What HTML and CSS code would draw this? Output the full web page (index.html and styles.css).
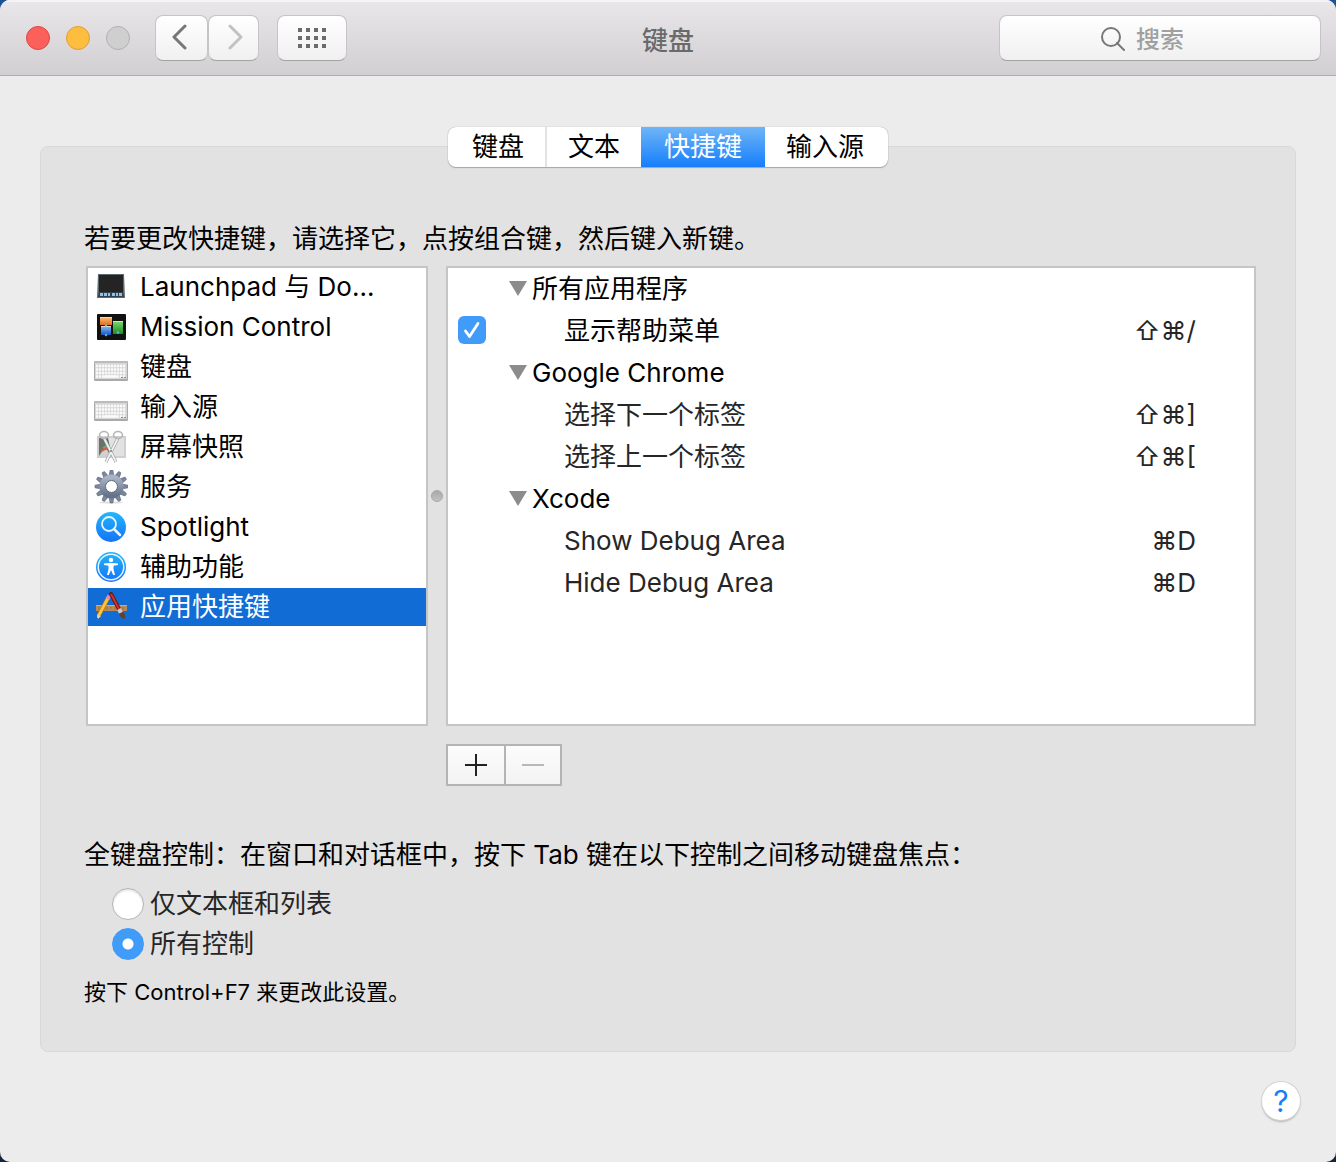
FILE: index.html
```html
<!DOCTYPE html>
<html lang="zh-CN">
<head>
    <meta charset="UTF-8">
    <meta name="viewport" content="width=device-width, initial-scale=1.0">
    <title>键盘</title>
    <link rel="stylesheet" href="styles.css">
</head>
<body>

    <div class="window">
        <!-- Title bar -->
        <header class="toolbar">
            <div class="toolbar-left">
                <div class="lights">
                    <button class="light close" aria-label="关闭"></button>
                    <button class="light minimize" aria-label="最小化"></button>
                    <button class="light disabled" aria-label="缩放" disabled></button>
                </div>
                <div class="nav-buttons">
                    <button class="tool-button back" aria-label="后退">
                        <svg width="18" height="28" viewBox="0 0 18 28"><path d="M14 2 L3 13 L14 24" fill="none" stroke="#777" stroke-width="3" stroke-linecap="round" stroke-linejoin="round"/></svg>
                    </button>
                    <button class="tool-button forward" aria-label="前进" disabled>
                        <svg width="18" height="28" viewBox="0 0 18 28"><path d="M4 2 L15 13 L4 24" fill="none" stroke="#c2c2c2" stroke-width="3" stroke-linecap="round" stroke-linejoin="round"/></svg>
                    </button>
                </div>
                <button class="tool-button grid" aria-label="显示全部">
                    <svg width="28" height="20" viewBox="0 0 28 20" fill="#6b6b6b"><path d="M0 0h4v4h-4zM8 0h4v4h-4zM16 0h4v4h-4zM24 0h4v4h-4zM0 8h4v4h-4zM8 8h4v4h-4zM16 8h4v4h-4zM24 8h4v4h-4zM0 16h4v4h-4zM8 16h4v4h-4zM16 16h4v4h-4zM24 16h4v4h-4z"/></svg>
                </button>
            </div>
            <h1>键盘</h1>
            <label class="search">
                <svg width="24" height="24" viewBox="0 0 24 24" fill="none" stroke="#777" stroke-width="2"><circle cx="10" cy="10" r="9"/><path d="M16 16 L23 23" stroke-linecap="round"/></svg>
                <input type="search" placeholder="搜索" aria-label="搜索">
            </label>
        </header>

        <main>
            <!-- Tabs -->
            <nav class="tabs">
                <button class="tab">键盘</button>
                <button class="tab">文本</button>
                <button class="tab active">快捷键</button>
                <button class="tab">输入源</button>
            </nav>

            <section class="panel">
                <p class="text">若要更改快捷键，请选择它，点按组合键，然后键入新键。</p>

                <div class="lists">
                    <!-- Categories -->
                    <ul class="categories">
                        <li><a href="#">
                            <svg class="icon" viewBox="0 1 34 34">
                                <path d="M4 5h26l1 24H3z" fill="#5c6a70"/><rect x="5" y="6" width="24" height="18" fill="#242424"/>
                                <path d="M5 23h24l1 5H4z" fill="#34414b"/>
                                <path d="M6 24h3v3h-3zM10 24h3v3h-3zM14 24h2v3h-2zM18 24h3v3h-3zM22 24h2v3h-2zM25 24h3v3h-3z" fill="#8cc4ee"/>
                            </svg>
                            <span>Launchpad 与 Do...</span></a></li>
                        <li><a href="#">
                            <svg class="icon" viewBox="0 1 34 34">
                                <defs>
                                    <linearGradient id="orange" x2="0" y2="1"><stop stop-color="#f5b473"/><stop offset="1" stop-color="#e46c12"/></linearGradient>
                                    <linearGradient id="blue" x2="0" y2="1"><stop stop-color="#7ab4ee"/><stop offset="1" stop-color="#1950c0"/></linearGradient>
                                    <linearGradient id="green" x2="0" y2="1"><stop stop-color="#76d36c"/><stop offset="1" stop-color="#198f1a"/></linearGradient>
                                </defs>
                                <rect x="3" y="5" width="29" height="26" rx="1" fill="#111"/>
                                <rect x="6" y="9" width="12" height="7" fill="url(#orange)"/>
                                <rect x="7" y="18" width="10" height="8" fill="url(#blue)"/>
                                <rect x="19" y="13" width="10" height="12" fill="url(#green)"/>
                                <path d="M6 8h12v1H6zM7 17h10v1H7zM19 12h10v1H19z" fill="#ddd"/>
                                <path d="M12 15l1.500 1.500-1.500 1.500-1.500-1.500zM12 24.500l1.500 1.500-1.500 1.500-1.500-1.500zM24 22l1.500 1.500-1.500 1.500-1.500-1.500z" fill="#5cbcf0"/>
                            </svg>
                            <span>Mission Control</span></a></li>
                        <li><a href="#">
                            <svg class="icon" viewBox="0 1 34 34">
                                <g id="keyboard">
                                    <rect x="0" y="12" width="34" height="20" rx="1" fill="#aaa"/>
                                    <rect x="1" y="12" width="32" height="18" fill="#d7d7d7"/>
                                    <path d="M0 12h34v2H0z" fill="#bbb"/>
                                    <path d="M2 17h30M2 20.500h30M2 24h30M2 27.500h30" stroke="#fafafa" stroke-width="2.500" stroke-dasharray="2.200 .8"/>
                                    <path d="M10 27.500h13" stroke="#fafafa" stroke-width="2.500"/>
                                    <path d="M27 28.500h2M30 28.500h2" stroke="#888"/>
                                </g>
                            </svg>
                            <span>键盘</span></a></li>
                        <li><a href="#">
                            <svg class="icon" viewBox="0 1 34 34"><use href="#keyboard"/></svg>
                            <span>输入源</span></a></li>
                        <li><a href="#">
                            <svg class="icon" viewBox="0 1 34 34">
                                <rect x="3" y="7" width="29" height="22" fill="#cfcfcf"/>
                                <rect x="5" y="9" width="25" height="18" fill="#b9bdb9"/>
                                <path d="M5 9h10l8 9-12 9H5z" fill="#6b6f6d"/>
                                <path d="M14 9h16v18H18z" fill="#e1e3e1"/>
                                <path d="M5 27l6-9 6 9z" fill="#cfd2cf"/>
                                <path d="M7 22l8-4" stroke="#d9583e" stroke-width="2"/><path d="M9 19l5-3" stroke="#58b86a" stroke-width="2"/>
                                <path d="M10 9L22 33M24 9L12 33" stroke="#999" stroke-width="3"/>
                                <path d="M10 9L22 33M24 9L12 33" stroke="#f2f2f2" stroke-width="1.800"/>
                                <g fill="none" stroke="#b5b5b5" stroke-width="1.600"><ellipse cx="10" cy="6" rx="4.500" ry="3.500"/><ellipse cx="24" cy="6" rx="4.500" ry="3.500"/></g>
                                <circle cx="17" cy="22" r="1" fill="#777"/>
                            </svg>
                            <span>屏幕快照</span></a></li>
                        <li><a href="#">
                            <svg class="icon" viewBox="0 1 34 34">
                                <defs>
                                    <linearGradient id="steel" x2="0" y2="1"><stop stop-color="#a9b4c5"/><stop offset="1" stop-color="#66728a"/></linearGradient>
                                    <path id="tooth" d="M15 7l1.200-6h2.600L20 7z"/>
                                </defs>
                                <ellipse cx="17" cy="33.500" rx="12" ry="1" fill="#ddd"/>
                                <g fill="#7c879d" stroke="#59647a" stroke-width=".6">
                                    <use href="#tooth"/>
                                    <use href="#tooth" transform="rotate(30 17.500 17.500)"/>
                                    <use href="#tooth" transform="rotate(60 17.500 17.500)"/>
                                    <use href="#tooth" transform="rotate(90 17.500 17.500)"/>
                                    <use href="#tooth" transform="rotate(120 17.500 17.500)"/>
                                    <use href="#tooth" transform="rotate(150 17.500 17.500)"/>
                                    <use href="#tooth" transform="rotate(180 17.500 17.500)"/>
                                    <use href="#tooth" transform="rotate(210 17.500 17.500)"/>
                                    <use href="#tooth" transform="rotate(240 17.500 17.500)"/>
                                    <use href="#tooth" transform="rotate(270 17.500 17.500)"/>
                                    <use href="#tooth" transform="rotate(300 17.500 17.500)"/>
                                    <use href="#tooth" transform="rotate(330 17.500 17.500)"/>
                                </g>
                                <circle cx="17.500" cy="17.500" r="9" fill="none" stroke="url(#steel)" stroke-width="6"/>
                                <circle cx="17.500" cy="17.500" r="6" fill="#fff" stroke="#59647a"/>
                            </svg>
                            <span>服务</span></a></li>
                        <li><a href="#">
                            <svg class="icon" viewBox="0 1 34 34">
                                <defs>
                                    <linearGradient id="sky" x2="0" y2="1"><stop stop-color="#22b7fa"/><stop offset="1" stop-color="#1672f8"/></linearGradient>
                                </defs>
                                <circle cx="17" cy="18" r="15" fill="url(#sky)"/>
                                <circle cx="15" cy="15" r="7" fill="none" stroke="#e6f5ff" stroke-width="1.800"/>
                                <path d="M20 20l6 6" stroke="#e6f5ff" stroke-width="2.500" stroke-linecap="round"/>
                            </svg>
                            <span>Spotlight</span></a></li>
                        <li><a href="#">
                            <svg class="icon" viewBox="0 1 34 34">
                                <circle cx="17" cy="18" r="15" fill="url(#sky)"/>
                                <circle cx="17" cy="18" r="12.800" fill="none" stroke="#e6f5ff" stroke-width="1.500"/>
                                <circle cx="17" cy="11" r="2.200" fill="#fff"/>
                                <path d="M10 14.500L15 14h4l5 .5v1.500l-4.500.8V20l1.500 6h-1.800L17 21l-2.200 5H13l1.500-6v-3.200L10 16z" fill="#fff"/>
                            </svg>
                            <span>辅助功能</span></a></li>
                        <li><a class="selected" href="#" aria-current="true">
                            <svg class="icon" viewBox="0 1 34 34">
                                <path d="M2 16h31v6H2z" fill="#b88a57"/><path d="M2 16h31v1H2z" fill="#d2aa75"/>
                                <path d="M5 18v3M9 18v2M13 18v3M17 18v2M21 18v3M25 18v2M29 18v3" stroke="#8b663d" stroke-width=".7"/>
                                <path d="M14 9L5 26" stroke="#b77515" stroke-width="4.200"/>
                                <path d="M14 9L5 26" stroke="#ffc53e" stroke-width="2.800"/>
                                <path d="M15.500 6.500L13.500 10" stroke="#e985ad" stroke-width="4"/>
                                <path d="M3.200 25l3.800 2-4 4z" fill="#ecd2a5"/><path d="M3 29l1 0-1 2z" fill="#222"/>
                                <path d="M17 5l8 15" stroke="#75130f" stroke-width="4" stroke-linecap="round"/>
                                <path d="M17 5l8 15" stroke="#cb3a28" stroke-width="1.800"/>
                                <path d="M25 20l2 4" stroke="#ccc" stroke-width="4"/>
                                <path d="M25 24.500l4-1.500q3 3 2 7q-5-1-6-5.500z" fill="#64412c"/>
                            </svg>
                            <span>应用快捷键</span></a></li>
                    </ul>

                    <div class="splitter"><span class="knob"></span></div>

                    <!-- Shortcuts -->
                    <div class="shortcuts">
                        <table>
                            <tbody>
                                <tr class="group">
                                    <td class="check"></td>
                                    <th colspan="2"><button class="toggle"><svg width="18" height="16" viewBox="0 0 18 16"><path d="M0 0h18L9 15z" fill="#8c8c8c"/></svg>所有应用程序</button></th>
                                </tr>
                                <tr class="enabled">
                                    <td class="check"><input type="checkbox" id="help-menu" checked></td>
                                    <td class="name"><label for="help-menu">显示帮助菜单</label></td>
                                    <td class="keys">⇧⌘/</td>
                                </tr>
                                <tr class="group">
                                    <td class="check"></td>
                                    <th colspan="2"><button class="toggle"><svg width="18" height="16" viewBox="0 0 18 16"><path d="M0 0h18L9 15z" fill="#8c8c8c"/></svg>Google Chrome</button></th>
                                </tr>
                                <tr>
                                    <td class="check"></td>
                                    <td class="name">选择下一个标签</td>
                                    <td class="keys">⇧⌘]</td>
                                </tr>
                                <tr>
                                    <td class="check"></td>
                                    <td class="name">选择上一个标签</td>
                                    <td class="keys">⇧⌘[</td>
                                </tr>
                                <tr class="group">
                                    <td class="check"></td>
                                    <th colspan="2"><button class="toggle"><svg width="18" height="16" viewBox="0 0 18 16"><path d="M0 0h18L9 15z" fill="#8c8c8c"/></svg>Xcode</button></th>
                                </tr>
                                <tr>
                                    <td class="check"></td>
                                    <td class="name">Show Debug Area</td>
                                    <td class="keys">⌘D</td>
                                </tr>
                                <tr>
                                    <td class="check"></td>
                                    <td class="name">Hide Debug Area</td>
                                    <td class="keys">⌘D</td>
                                </tr>
                            </tbody>
                        </table>
                    </div>
                </div>

                <!-- Add / remove -->
                <div class="edit-buttons">
                    <button class="add" aria-label="添加"><svg width="22" height="22" viewBox="0 0 22 22"><path d="M0 11h22M11 0v22" stroke="#222" stroke-width="2"/></svg></button>
                    <button class="remove" aria-label="移除" disabled><svg width="22" height="22" viewBox="0 0 22 22"><path d="M0 11h22" stroke="#b8b8b8" stroke-width="2"/></svg></button>
                </div>

                <!-- Full keyboard access -->
                <fieldset>
                    <legend class="text">全键盘控制：在窗口和对话框中，按下 Tab 键在以下控制之间移动键盘焦点：</legend>
                    <div class="options">
                        <label class="option"><input type="radio" name="access"><span>仅文本框和列表</span></label>
                        <label class="option"><input type="radio" name="access" checked><span>所有控制</span></label>
                    </div>
                </fieldset>
                <p class="note">按下 Control+F7 来更改此设置。</p>
            </section>

            <button class="help" aria-label="帮助">?</button>
        </main>
    </div>

</body>
</html>
```
FILE: styles.css
```css
* {
    box-sizing: border-box;
}

body {
    margin: 0;
    background: linear-gradient(#1b5398, #152440);
    font-family: Inter, "Noto Sans CJK SC", sans-serif;
    font-size: 26px;
    line-height: 38px;
    color: #000000;
}

button, input {
    font: inherit;
    color: inherit;
    margin: 0;
    padding: 0;
}

button {
    border: none;
    background: none;
}

svg {
    display: block;
    flex: none;
}

.window {
    min-height: 100vh;
    background-color: #ececec;
    border-radius: 10px;
    overflow: hidden;
}

/* Title bar */
.toolbar {
    display: grid;
    grid-template-columns: 1fr auto 1fr;
    align-items: center;
    height: 76px;
    padding: 0 15px;
    background: linear-gradient(#e9e7ea, #d1cfd2);
    border-bottom: 1px solid #aeacae;
    box-shadow: inset 0 2px 0 #f5f4f5;
}

.toolbar-left {
    display: flex;
    align-items: center;
    padding-left: 11px;
}

.lights {
    display: flex;
    gap: 16px;
    margin-right: 25px;
}

.light {
    width: 24px;
    height: 24px;
    border-radius: 50%;
}

.close {
    background-color: #fc605b;
    border: 1px solid #e04641;
}

.minimize {
    background-color: #fdbd3f;
    border: 1px solid #de9f35;
}

.disabled {
    background-color: #cfcfcf;
    border: 1px solid #b1b0b2;
}

.nav-buttons {
    display: flex;
    margin-right: 18px;
}

.tool-button, .search {
    display: flex;
    align-items: center;
    height: 46px;
    background: linear-gradient(#ffffff, #f0f0f0);
    border: 1px solid #c6c4c7;
    border-bottom-color: #a4a2a5;
    border-radius: 8px;
}

.tool-button {
    justify-content: center;
}

.back {
    width: 53px;
    padding-right: 4px;
}

.forward {
    width: 51px;
    padding-left: 2px;
}

.grid {
    width: 70px;
}

h1 {
    margin: 0;
    padding-top: 6px;
    font-size: 26px;
    font-weight: 500;
    color: #6a6a6a;
}

.search {
    justify-self: end;
    width: 322px;
    padding-left: 101px;
    gap: 11px;
}

.search svg {
    margin-top: 2px;
}

.search input {
    flex: 1;
    min-width: 0;
    height: 40px;
    padding-top: 3px;
    font-size: 24px;
    font-weight: 500;
    border: none;
    outline: none;
    background: none;
    appearance: none;
}

.search input::placeholder {
    color: #a0a0a0;
    opacity: 1;
}

main {
    padding: 51px 40px 40px;
}

/* Tabs lie over the top edge of the panel */
.tabs {
    position: relative;
    display: flex;
    width: fit-content;
    height: 40px;
    margin: 0 auto -21px;
    background-color: #ffffff;
    border-radius: 8px;
    box-shadow: 0 0 1px #888888, 0 1px 1px #aaaaaa;
}

.tab {
    padding: 0 21px;
}

.tab:first-child {
    padding-left: 24px;
    border-right: 2px solid #e3e3e3;
}

.tab:last-child {
    padding-right: 24px;
}

.tab.active {
    padding: 0 23px;
    color: #ffffff;
    background: linear-gradient(#6fb5f8, #157efb);
}

.panel {
    padding: 73px 39px 40px 43px;
    background-color: #e2e2e2;
    border: 1px solid #d8d8d8;
    border-radius: 8px;
}

.text {
    margin: 0;
    padding: 0;
}

.lists {
    display: flex;
    height: 460px;
    margin: 8px 0 18px 2px;
}

.categories, .shortcuts {
    background-color: #ffffff;
    border: 2px solid #c5c5c5;
}

/* Categories */
.categories {
    display: flex;
    flex-direction: column;
    gap: 2px;
    width: 342px;
    margin: 0;
    padding: 0;
    list-style: none;
}

.categories a {
    display: flex;
    align-items: center;
    gap: 12px;
    height: 38px;
    padding-left: 6px;
    color: #000000;
    text-decoration: none;
    white-space: nowrap;
}

.categories a.selected {
    color: #ffffff;
    background-color: #116cd6;
}

.icon {
    width: 34px;
    height: 34px;
}

.splitter {
    display: flex;
    align-items: center;
    justify-content: center;
    width: 18px;
}

.knob {
    width: 12px;
    height: 12px;
    border-radius: 50%;
    background: linear-gradient(#a9a9a9, #c2c2c2);
    border: 1px solid #a8a8a8;
}

/* Shortcuts */
.shortcuts {
    flex: 1;
    color: #262626;
}

table {
    width: 100%;
    border-collapse: collapse;
}

tr {
    height: 42px;
}

td, th {
    padding: 0;
    text-align: left;
    font-weight: 400;
}

.group, .enabled .name {
    color: #000000;
}

.check {
    width: 61px;
    padding: 0 0 2px 10px;
}

.toggle {
    display: flex;
    align-items: center;
    gap: 5px;
}

.name {
    padding-left: 55px;
}

.keys {
    padding-right: 58px;
    text-align: right;
}

input[type="checkbox"] {
    display: block;
    appearance: none;
    width: 28px;
    height: 28px;
    border-radius: 6px;
    background: #419bf9 url('data:image/svg+xml,<svg xmlns="http://www.w3.org/2000/svg" viewBox="0 0 28 28"><path d="M7.500 15l4 5.500 8.500-13" fill="none" stroke="white" stroke-width="2.800" stroke-linecap="round" stroke-linejoin="round"/></svg>');
}

/* Add / remove */
.edit-buttons {
    display: flex;
    width: fit-content;
    margin-left: 362px;
    border: 2px solid #b4b4b4;
}

.edit-buttons button {
    display: flex;
    align-items: center;
    justify-content: center;
    width: 54px;
    height: 38px;
    background: linear-gradient(#fcfcfc, #f3f3f3);
}

.edit-buttons .add {
    width: 58px;
    border-right: 2px solid #b4b4b4;
}

fieldset {
    margin: 50px 0 0;
    padding: 0;
    border: none;
}

.options {
    padding-top: 10px;
}

.option {
    display: flex;
    align-items: center;
    gap: 6px;
    width: fit-content;
    height: 40px;
    margin-left: 28px;
    color: #262626;
}

input[type="radio"] {
    appearance: none;
    width: 32px;
    height: 32px;
    border-radius: 50%;
    background-color: #ffffff;
    border: 1px solid #b4b4b4;
    box-shadow: inset 0 2px 2px #e6e6e6;
}

input[type="radio"]:checked {
    background: radial-gradient(circle, #ffffff 5px, #419bf9 6px);
    border-color: #419bf9;
    box-shadow: none;
}

.note {
    margin: 9px 0 0;
    font-size: 22px;
}

.help {
    display: block;
    width: 38px;
    height: 38px;
    margin: 30px -4px 0 auto;
    border-radius: 50%;
    background-color: #ffffff;
    box-shadow: 0 0 0 1px #d2d2d2, 0 2px 2px #b0b0b0;
    color: #157efb;
    font-size: 30px;
}
```
